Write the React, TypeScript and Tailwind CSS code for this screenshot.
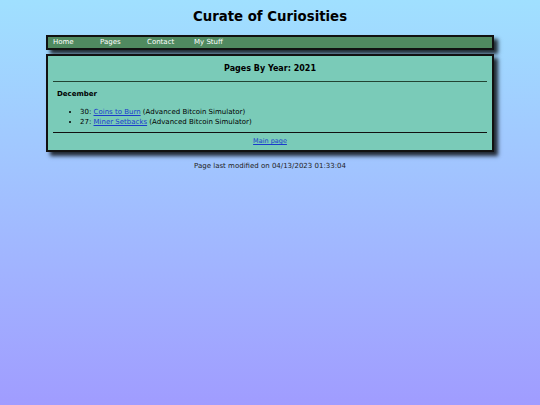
export default function App() {
  const nav = ["Home", "Pages", "Contact", "My Stuff"];
  const pages = [
    { day: 30, title: "Coins to Burn", series: "Advanced Bitcoin Simulator" },
    { day: 27, title: "Miner Setbacks", series: "Advanced Bitcoin Simulator" },
  ];

  return (
    <div
      className="min-h-screen bg-gradient-to-b from-[#a0e0ff] to-[#a09cff] text-black"
      style={{ fontFamily: '"DejaVu Sans", Verdana, sans-serif' }}
    >
      <div className="mx-auto w-[448px] pt-[9px]">
        <h1 className="text-center text-[13.3px] font-bold leading-[16px]">Curate of Curiosities</h1>

        <nav className="mt-[10px] flex h-[15px] items-center border-2 border-[#111] bg-[#508a60] pl-[5px] shadow-[4px_4px_4px_rgba(0,0,0,0.8)]">
          {nav.map((item) => (
            <a key={item} href="#" className="w-[47px] text-[7px] leading-none text-white">
              {item}
            </a>
          ))}
        </nav>

        <main className="mt-[4px] border-2 border-[#111] bg-[#7acbb8] px-[5px] shadow-[4px_4px_4px_rgba(0,0,0,0.8)]">
          <h2 className="pt-[8px] pb-[7px] text-center text-[8px] font-bold leading-[10px]">
            Pages By Year: 2021
          </h2>
          <hr className="border-t border-[#224433]" />

          <h3 className="mt-[8px] pl-[4px] text-[7px] font-bold leading-[9px]">December</h3>
          <ul className="mt-[8px] mb-[5px] list-disc pl-[27px] text-[7px] leading-[10px]">
            {pages.map((p) => (
              <li key={p.day}>
                {p.day}:{" "}
                <a href="#" className="text-[#1a3ccc] underline">
                  {p.title}
                </a>{" "}
                ({p.series})
              </li>
            ))}
          </ul>
          <hr className="border-t border-[#111]" />
          <div className="pt-[4px] pb-[5px] text-center text-[6.5px] leading-[8px]">
            <a href="#" className="text-[#1a3ccc] underline">
              Main page
            </a>
          </div>
        </main>

        <p className="mt-[9px] text-center text-[7px] leading-[10px] text-[#222]">
          Page last modified on 04/13/2023 01:33:04
        </p>
      </div>
    </div>
  );
}
